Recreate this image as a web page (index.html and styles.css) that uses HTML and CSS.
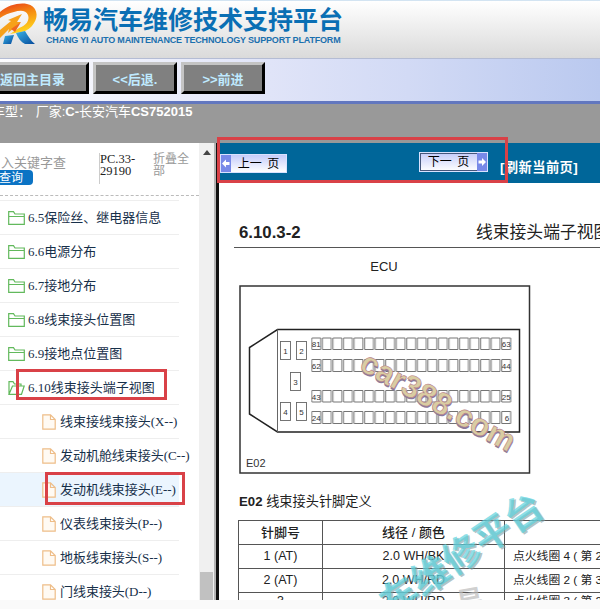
FILE: index.html
```html
<!DOCTYPE html>
<html lang="zh-CN">
<head>
    <meta charset="UTF-8">
    <title>畅易汽车维修技术支持平台</title>
    <link rel="stylesheet" href="styles.css">
</head>
<body>
    <div class="page">
        <header class="header">
            <svg class="logo" width="40" height="50" viewBox="0 0 40 50">
                <defs>
                    <linearGradient id="fire" x1="0" y1="0" x2="0.3" y2="1">
                        <stop offset="0" stop-color="#e8391c"/>
                        <stop offset="0.45" stop-color="#f58a12"/>
                        <stop offset="1" stop-color="#ffd21c"/>
                    </linearGradient>
                    <linearGradient id="leg" x1="0" y1="0" x2="1" y2="1">
                        <stop offset="0" stop-color="#39b3e6"/>
                        <stop offset="1" stop-color="#064a9c"/>
                    </linearGradient>
                </defs>
                <path d="M0 11C8 4 19 1.500 27 3C37 5 39 15 34 22C31 27 27 30 21 31L10 33L19 27C26 25 30 19 28 14C26 9 20 9 14 11C9 12 4 14 0 17Z" fill="url(#fire)"/>
                <path d="M0 29L11 20L8 19L22 13L17 21L21 21L8 32L9 28L0 37Z" fill="#f6a11a"/>
                <path d="M11 28L21 21L15 31Z" fill="#ee6820"/>
                <path d="M5 35L14 34L11 43H3Z" fill="url(#leg)"/>
                <path d="M16 32L25 30C28 35 31 40 35 43H25C21 41 18 37 16 32Z" fill="url(#leg)"/>
            </svg>
            <div class="brand">
                <h1>畅易汽车维修技术支持平台</h1>
                <p>CHANG YI AUTO MAINTENANCE TECHNOLOGY SUPPORT PLATFORM</p>
            </div>
        </header>

        <nav class="nav">
            <button class="home">返回主目录</button>
            <button>&lt;&lt;后退.</button>
            <button>&gt;&gt;前进</button>
        </nav>

        <div class="model"><span>车型：</span> 厂家:<b>C-</b>长安汽车<b>CS752015</b></div>

        <div class="content">
            <aside class="sidebar">
                <div class="tree">
                    <div class="search">
                        <div class="keyword">
                            <span>入关键字查</span>
                            <button>查询</button>
                        </div>
                        <div class="code">PC.33-29190</div>
                        <div class="fold">折叠全部</div>
                    </div>
                    <ul class="list">
                        <li><svg class="icon" viewBox="0 0 17 14"><path d="M.7 13.3V.7H5.5L7 3H16.3V13.3ZM.7 5.5H16.3"/></svg>6.5保险丝、继电器信息</li>
                        <li><svg class="icon" viewBox="0 0 17 14"><path d="M.7 13.3V.7H5.5L7 3H16.3V13.3ZM.7 5.5H16.3"/></svg>6.6电源分布</li>
                        <li><svg class="icon" viewBox="0 0 17 14"><path d="M.7 13.3V.7H5.5L7 3H16.3V13.3ZM.7 5.5H16.3"/></svg>6.7接地分布</li>
                        <li><svg class="icon" viewBox="0 0 17 14"><path d="M.7 13.3V.7H5.5L7 3H16.3V13.3ZM.7 5.5H16.3"/></svg>6.8线束接头位置图</li>
                        <li><svg class="icon" viewBox="0 0 17 14"><path d="M.7 13.3V.7H5.5L7 3H16.3V13.3ZM.7 5.5H16.3"/></svg>6.9接地点位置图</li>
                        <li><svg class="icon" viewBox="0 0 17 14"><path d="M1 13.3V.7H5L6.5 3H13V5M1 13.3L4.5 5H16.2L13.5 13.3Z"/></svg>6.10线束接头端子视图</li>
                        <li class="sub"><svg class="doc" viewBox="0 0 14 16"><path d="M.8 .8H8.5L13.2 5.5V15.2H.8ZM8.5 .8V5.5H13.2"/></svg>线束接线束接头(X--)</li>
                        <li class="sub"><svg class="doc" viewBox="0 0 14 16"><path d="M.8 .8H8.5L13.2 5.5V15.2H.8ZM8.5 .8V5.5H13.2"/></svg>发动机舱线束接头(C--)</li>
                        <li class="sub active"><svg class="doc" viewBox="0 0 14 16"><path d="M.8 .8H8.5L13.2 5.5V15.2H.8ZM8.5 .8V5.5H13.2"/></svg>发动机线束接头(E--)</li>
                        <li class="sub"><svg class="doc" viewBox="0 0 14 16"><path d="M.8 .8H8.5L13.2 5.5V15.2H.8ZM8.5 .8V5.5H13.2"/></svg>仪表线束接头(P--)</li>
                        <li class="sub"><svg class="doc" viewBox="0 0 14 16"><path d="M.8 .8H8.5L13.2 5.5V15.2H.8ZM8.5 .8V5.5H13.2"/></svg>地板线束接头(S--)</li>
                        <li class="sub"><svg class="doc" viewBox="0 0 14 16"><path d="M.8 .8H8.5L13.2 5.5V15.2H.8ZM8.5 .8V5.5H13.2"/></svg>门线束接头(D--)</li>
                    </ul>
                </div>
                <div class="scrollbar">
                    <div class="arrow"></div>
                    <div class="thumb"></div>
                </div>
            </aside>

            <main class="main">
                <div class="toolbar">
                    <button class="pager prev">
                        <svg viewBox="0 0 10 16"><path d="M1 8L5 4V6.5H8.5V9.5H5V12Z"/></svg>
                        <span>上一 页</span>
                    </button>
                    <button class="pager next">
                        <span>下一 页</span>
                        <svg viewBox="0 0 10 16"><path d="M9 8L5 4V6.5H1.5V9.5H5V12Z"/></svg>
                    </button>
                    <a class="refresh">[刷新当前页]</a>
                </div>

                <div class="doc-page">
                    <div class="doc-title">
                        <b>6.10.3-2</b>
                        <span>线束接头端子视图</span>
                    </div>
                    <div class="ecu">ECU</div>

                    <svg class="connector" width="292" height="189" viewBox="0 0 292 189">
                        <defs>
                            <pattern id="pins" x="72.2" y="0" width="10.55" height="189" patternUnits="userSpaceOnUse">
                                <path d="M.7 53H9.5V64.500H.7ZM.7 74.500H9.5V86.500H.7ZM.7 105.500H9.5V117H.7ZM.7 126.500H9.5V138.500H.7Z" fill="#fff" stroke="#555" stroke-width="0.8"/>
                            </pattern>
                        </defs>
                        <rect x="1" y="1" width="289.5" height="187" fill="none" stroke="#333" stroke-width="1.5"/>
                        <path d="M38.5 44.5H280.5V147H38.5L10.5 129V62.5Z" fill="none" stroke="#222" stroke-width="1.5"/>
                        <path d="M38.5 44.5V147" stroke="#666"/>
                        <rect x="72.2" y="50" width="200.45" height="92" fill="url(#pins)"/>
                        <g fill="none" stroke="#666" stroke-width="0.9">
                            <rect x="41.5" y="56.5" width="10" height="18"/>
                            <rect x="57.5" y="56.5" width="10" height="18"/>
                            <rect x="51.5" y="87.5" width="10" height="18"/>
                            <rect x="41.5" y="117.5" width="10" height="18"/>
                            <rect x="57.5" y="117.5" width="10" height="18"/>
                        </g>
                        <g class="pin-no">
                            <text x="46.5" y="68.5">1</text>
                            <text x="62.5" y="68.5">2</text>
                            <text x="56.5" y="99.5">3</text>
                            <text x="46.5" y="129.5">4</text>
                            <text x="62.5" y="129.5">5</text>
                            <text x="77.3" y="62">81</text>
                            <text x="77.3" y="83.5">62</text>
                            <text x="77.3" y="114.5">43</text>
                            <text x="77.3" y="135.5">24</text>
                            <text x="267.3" y="62">63</text>
                            <text x="267.3" y="83.5">44</text>
                            <text x="267.3" y="114.5">25</text>
                            <text x="268" y="135.5">6</text>
                        </g>
                        <text class="label" x="7" y="181.5">E02</text>
                        <g class="mark" transform="translate(119 84) rotate(29)">
                            <text class="mark-shade" x="1" y="1.5" textLength="172">car388.com</text>
                            <text class="mark-face" x="0" y="0" textLength="172">car388.com</text>
                        </g>
                    </svg>

                    <h3><b>E02</b> 线束接头针脚定义</h3>

                    <table>
                        <tr><th>针脚号</th><th>线径 / 颜色</th><th></th></tr>
                        <tr><td>1 (AT)</td><td>2.0 WH/BK</td><td>点火线圈 4 ( 第 2</td></tr>
                        <tr><td>2 (AT)</td><td>2.0 WH/RD</td><td>点火线圈 2 ( 第 3</td></tr>
                        <tr class="last"><td>3</td><td>2.0 WH/RD</td><td>点火线圈 3 ( 第 2</td></tr>
                    </table>

                    <svg class="watermark" width="381" height="130" viewBox="219 470 381 130">
                        <text class="wm-shade" transform="translate(391 618) rotate(-34)" x="1" y="2">车维修平台</text>
                        <text class="wm-face" transform="translate(391 618) rotate(-34)">车维修平台</text>
                        <text class="wm-grey" transform="translate(458 613) rotate(-10)">易</text>
                    </svg>
                </div>
            </main>
        </div>

        <div class="frame frame-pager"></div>
        <div class="frame frame-section"></div>
        <div class="frame frame-item"></div>
    </div>
</body>
</html>
```

FILE: styles.css
```css
* {
    box-sizing: border-box;
}
body {
    margin: 0;
    background: #fafafa;
    font-family: "Liberation Sans", "Noto Sans CJK SC", sans-serif;
}
.page {
    position: relative;
    width: 600px;
    height: 609px;
    overflow: hidden;
}
button {
    font-family: inherit;
    padding: 0;
    white-space: nowrap;
}

/* header */
.header {
    display: flex;
    height: 59px;
    border-top: 1px solid #d3e4f2;
    border-bottom: 1px solid #b4bcd4;
    background: linear-gradient(#fff, #dadada);
}
.brand {
    margin-left: 3px;
    white-space: nowrap;
}
h1 {
    margin: 4px 0 0;
    font-size: 25px;
    line-height: 30px;
    color: #0a6fb4;
}
.brand p {
    margin: 0 0 0 3px;
    font-size: 9px;
    font-weight: bold;
    letter-spacing: -0.18px;
    line-height: 11px;
    color: #1b70ae;
}

.nav {
    display: flex;
    gap: 4px;
    height: 45px;
    padding-top: 3px;
    border-bottom: 3px solid #6277bf;
    background: linear-gradient(90deg, #fdfdff, #e0e4f8 45%, #d2daf5 68%, #bac9ef);
}
.nav button {
    width: 84px;
    height: 32px;
    border: 3px solid #000;
    border-top-color: #c4c4c4;
    border-left-color: #c4c4c4;
    background: #808080;
    color: #bfeaff;
    font-size: 13px;
    font-weight: bold;
}
.nav .home {
    width: 109px;
    margin-left: -20px;
    padding-right: 4px;
}
.model {
    height: 39px;
    background: #999;
    color: #fff;
    font-size: 13px;
    line-height: 16px;
    white-space: pre;
}
.model span {
    margin: 0 1px 0 -8px;
}

.content {
    display: flex;
    height: 457px;
    overflow: hidden;
}

/* left tree */
.sidebar {
    display: flex;
    width: 219px;
    border-right: 3px solid #111;
    background: #fff;
}
.tree {
    width: 199px;
}
.search {
    display: flex;
    height: 53px;
    border-bottom: 1px dashed #bbb;
    white-space: nowrap;
}
.keyword {
    width: 99px;
    padding-top: 12px;
    color: #999;
    font-size: 13px;
    line-height: 15px;
}
.keyword span {
    display: block;
    margin-left: 1px;
}
.keyword button {
    display: block;
    width: 37px;
    height: 15px;
    margin-left: -4px;
    padding-right: 7px;
    border: 0;
    border-radius: 4px;
    background: #0b73c4;
    color: #fff;
    font-size: 12px;
    line-height: 14px;
}
.code {
    width: 54px;
    height: 31px;
    margin-top: 10px;
    border-left: 1px solid #ccc;
    font: 12.5px/12px "Liberation Serif", serif;
    white-space: normal;
    color: #222;
}
.fold {
    width: 38px;
    margin-top: 10px;
    color: #999;
    font-size: 12px;
    line-height: 12px;
    white-space: normal;
}
.list {
    margin: 4px 0 0;
    padding: 0;
    list-style: none;
    font: 13px/33px "Liberation Serif", "Noto Sans CJK SC", serif;
    color: #17304a;
}
.list li {
    display: flex;
    align-items: center;
    gap: 3px;
    width: 179px;
    height: 34px;
    padding-left: 8px;
    border-top: 1px solid #eee;
    white-space: nowrap;
}
.list .sub {
    padding-left: 42px;
    gap: 4px;
    letter-spacing: -0.04px;
}
.list .active {
    background: #ebf5fe;
}
.icon {
    flex: none;
    width: 17px;
    height: 14px;
    fill: none;
    stroke: #62b95c;
    stroke-width: 1.2;
}
.doc {
    flex: none;
    width: 14px;
    height: 16px;
    fill: #fffaf3;
    stroke: #eebd88;
    stroke-width: 1.2;
}
.scrollbar {
    display: flex;
    flex-direction: column;
    justify-content: space-between;
    width: 17px;
    border-right: 2px solid #b5b5b5;
    background: #f0f0f0;
}
.arrow {
    margin: 7px 0 0 4px;
    width: 0;
    border: 4px solid transparent;
    border-top: 0;
    border-bottom: 5px solid #444;
}
.thumb {
    width: 13px;
    height: 28px;
    margin-left: 1px;
    background: #c1c1c1;
}

/* right document */
.main {
    position: relative;
    width: 381px;
    background: #fff;
}
.toolbar {
    display: flex;
    align-items: flex-start;
    height: 40px;
    background: #069;
}
.pager {
    display: flex;
    align-items: center;
    justify-content: space-between;
    border: 1px solid #d8e2ff;
    background: linear-gradient(#c4ccfa, #fff);
    font-size: 12px;
    line-height: 16px;
    color: #000;
}
.pager svg {
    width: 10px;
    height: 100%;
    background: #7789e8;
    fill: #fff;
}
.pager span {
    flex: 1;
    text-align: center;
    word-spacing: 2px;
}
.prev {
    width: 67px;
    height: 19px;
    margin: 11px 0 0 1px;
}
.next {
    width: 69px;
    height: 20px;
    margin: 9px 0 0 132px;
    box-shadow: inset 0 0 0 1px #46577c;
}
.refresh {
    margin: 16px 0 0 12px;
    font-size: 13.3px;
    font-weight: bold;
    letter-spacing: 0.4px;
    line-height: 18px;
    color: #fff;
    white-space: nowrap;
}
.doc-page {
    padding-left: 20px;
    white-space: nowrap;
    color: #222;
}
.doc-title {
    display: flex;
    justify-content: space-between;
    width: 366px;
    margin-left: -5px;
    margin-top: 37px;
    padding-left: 5px;
    height: 28px;
    border-bottom: 1px solid #555;
    line-height: 26px;
}
.doc-title b {
    font-size: 16.8px;
}
.doc-title span {
    width: 124px;
    font-size: 16.8px;
}
.ecu {
    width: 290px;
    margin-top: 9px;
    text-align: center;
    font-size: 13px;
    line-height: 20px;
}
.connector {
    display: block;
    margin-top: 8px;
}
.pin-no {
    font-size: 8px;
    text-anchor: middle;
    fill: #333;
}
.label {
    font-size: 11px;
    fill: #333;
}
.mark {
    font-size: 31px;
    font-weight: bold;
}
.mark-shade {
    fill: #8a7a9c;
}
.mark-face {
    fill: #d9cda2;
    stroke: #b9828a;
    stroke-width: 0.6;
}
h3 {
    margin: 18px 0 0;
    font-size: 13.2px;
    font-weight: normal;
    line-height: 20px;
}
table {
    width: 460px;
    margin: 8px 0 0 -1px;
    border-collapse: collapse;
    table-layout: fixed;
    font-size: 12.5px;
}
th, td {
    height: 24px;
    padding: 0;
    border: 1px solid #555;
    text-align: center;
    line-height: 21px;
}
th {
    font-weight: 500;
    font-size: 13px;
}
th:first-child {
    width: 84px;
}
th:nth-child(2) {
    width: 182px;
}
td:last-child {
    padding-left: 8px;
    text-align: left;
    font-size: 11.8px;
}
.last td {
    vertical-align: top;
    line-height: 17px;
}
.watermark {
    position: absolute;
    left: 0;
    bottom: 0;
}
.watermark text {
    font-size: 37.5px;
    font-weight: bold;
}
.watermark .wm-shade {
    fill: #7d9ca4;
    fill-opacity: 0.6;
}
.watermark .wm-face {
    fill: #5bd3de;
    fill-opacity: 0.7;
}
.watermark .wm-grey {
    font-size: 28px;
    fill: #bbb;
    fill-opacity: 0.7;
}

/* red marker frames */
.frame {
    position: absolute;
    border: 3px solid #d94147;
}
.frame-pager {
    left: 217px;
    top: 137px;
    width: 291px;
    height: 46px;
}
.frame-section {
    left: 16px;
    top: 369px;
    width: 151px;
    height: 31px;
}
.frame-item {
    left: 45px;
    top: 472px;
    width: 140px;
    height: 33px;
}
```
